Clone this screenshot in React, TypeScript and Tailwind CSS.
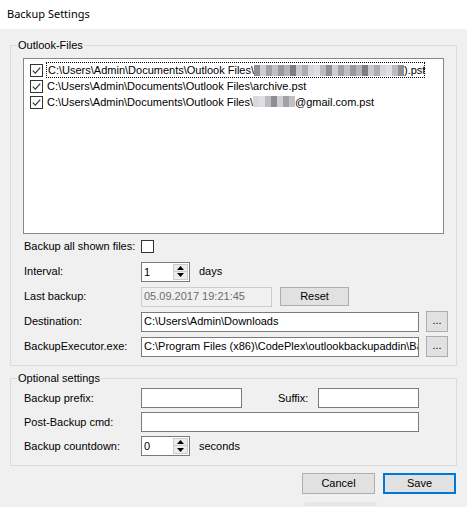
import React from "react";

const shades = [
  "bg-[#b5b5b8]",
  "bg-[#8e8e93]",
  "bg-[#c9c9cc]",
  "bg-[#a3a0a8]",
  "bg-[#d8d8da]",
  "bg-[#9b979f]",
  "bg-[#bdbdc0]",
  "bg-[#7f7c85]",
  "bg-[#cfcfd2]",
  "bg-[#aeabb3]",
  "bg-[#c2bfc6]",
  "bg-[#e0e0e2]",
];

/** verpixelter Bereich (Mailadresse) */
function Mosaic({ count, seed }: { count: number; seed: number }) {
  return (
    <span className="inline-flex h-[11px] align-[-1px]">
      {Array.from({ length: count }, (_, i) => (
        <span
          key={i}
          className={`h-full w-[6px] ${shades[(i * 7 + seed) % shades.length]}`}
        />
      ))}
    </span>
  );
}

function CheckBox({ checked }: { checked?: boolean }) {
  return (
    <span className="flex h-[13px] w-[13px] shrink-0 items-center justify-center border border-[#333] bg-white">
      {checked && (
        <svg width="9" height="9" viewBox="0 0 9 9">
          <path d="M0.8 4.6 L3.3 7.1 L8.2 1.6" fill="none" stroke="#333" strokeWidth="1.2" />
        </svg>
      )}
    </span>
  );
}

function Spinner({ value }: { value: string }) {
  return (
    <div className="flex h-[20px] w-[49px] border border-[#7a7a7a] bg-white">
      <span className="flex-1 pl-[2px] leading-[18px]">{value}</span>
      <div className="my-[1px] mr-[1px] flex w-[15px] flex-col">
        <span className="flex h-1/2 items-center justify-center border border-[#cccccc] bg-[#ececec]">
          <svg width="7" height="4" viewBox="0 0 7 4">
            <path d="M0 4 L3.5 0 L7 4 Z" fill="#000" />
          </svg>
        </span>
        <span className="flex h-1/2 items-center justify-center border border-t-0 border-[#cccccc] bg-[#ececec]">
          <svg width="7" height="4" viewBox="0 0 7 4">
            <path d="M0 0 L7 0 L3.5 4 Z" fill="#000" />
          </svg>
        </span>
      </div>
    </div>
  );
}

function Button({ label, w, primary }: { label: string; w: string; primary?: boolean }) {
  return (
    <button
      className={[
        "flex items-center justify-center bg-[#e1e1e1] leading-none",
        w,
        primary ? "h-[21px] border-2 border-[#0078d7]" : "h-[21px] border border-[#adadad]",
      ].join(" ")}
    >
      {label}
    </button>
  );
}

function Row({ label, h, children }: { label: string; h: string; children: React.ReactNode }) {
  return (
    <div className={`flex items-center pl-[13px] ${h}`}>
      <span className="w-[117px] shrink-0">{label}</span>
      {children}
    </div>
  );
}

const base = "C:\\Users\\Admin\\Documents\\Outlook Files\\";

export default function App() {
  return (
    <div className="h-[507px] w-[467px] overflow-hidden bg-[#f0f0f0] font-['Liberation_Sans',Arial,sans-serif] text-[11px] text-black">
      {/* Titel */}
      <div className="flex h-[29px] items-center bg-white pl-[7px] font-['Segoe_UI','Noto_Sans',sans-serif] text-[11px]">
        Backup Settings
      </div>

      <div className="px-[10px]">
        {/* Outlook-Files */}
        <div className="relative mt-[16px] border border-[#dcdcdc] pb-[6px] pt-[12px]">
          <span className="absolute -top-[7px] left-[6px] bg-[#f0f0f0] px-[1px] leading-[13px]">
            Outlook-Files
          </span>

          <div className="ml-[12px] h-[176px] w-[421px] border border-[#828790] bg-white pl-[6px] pt-[3px]">
            <div className="flex h-[16px] items-center">
              <CheckBox checked />
              <span className="ml-[3px] flex h-[16px] w-[379px] items-center border border-dotted border-black pl-[1px] whitespace-nowrap">
                {base}
                <Mosaic count={25} seed={1} />
                ).pst
              </span>
            </div>
            <div className="flex h-[16px] items-center">
              <CheckBox checked />
              <span className="ml-[4px] whitespace-nowrap">{base}archive.pst</span>
            </div>
            <div className="flex h-[16px] items-center">
              <CheckBox checked />
              <span className="ml-[4px] whitespace-nowrap">
                {base}
                <Mosaic count={7} seed={4} />
                @gmail.com.pst
              </span>
            </div>
          </div>

          <Row label="Backup all shown files:" h="h-[25px]">
            <CheckBox />
          </Row>
          <Row label="Interval:" h="h-[25px]">
            <Spinner value="1" />
            <span className="ml-[9px]">days</span>
          </Row>
          <Row label="Last backup:" h="h-[25px]">
            <div className="flex h-[20px] w-[131px] items-center border border-[#cccccc] bg-[#f0f0f0] pl-[2px] text-[#6d6d6d]">
              05.09.2017 19:21:45
            </div>
            <div className="ml-[8px]">
              <button className="flex h-[19px] w-[69px] items-center justify-center border border-[#adadad] bg-[#e1e1e1] leading-none">
                Reset
              </button>
            </div>
          </Row>
          <Row label="Destination:" h="h-[25px]">
            <div className="flex h-[20px] w-[278px] items-center border border-[#7a7a7a] bg-white pl-[2px] whitespace-nowrap">
              {"C:\\Users\\Admin\\Downloads"}
            </div>
            <button className="ml-[7px] flex h-[21px] w-[22px] items-center justify-center border border-[#adadad] bg-[#e1e1e1] pb-[3px] leading-none">
              ...
            </button>
          </Row>
          <Row label="BackupExecutor.exe:" h="h-[25px]">
            <div className="flex h-[20px] w-[278px] items-center overflow-hidden border border-[#7a7a7a] bg-white pl-[2px] whitespace-nowrap">
              {"C:\\Program Files (x86)\\CodePlex\\outlookbackupaddin\\Ba"}
            </div>
            <button className="ml-[7px] flex h-[21px] w-[22px] items-center justify-center border border-[#adadad] bg-[#e1e1e1] pb-[3px] leading-none">
              ...
            </button>
          </Row>
        </div>

        {/* Optional settings */}
        <div className="relative mt-[12px] border border-[#dcdcdc] pb-[7px] pt-[7px]">
          <span className="absolute -top-[7px] left-[6px] bg-[#f0f0f0] px-[1px] leading-[13px]">
            Optional settings
          </span>
          <Row label="Backup prefix:" h="h-[24px]">
            <div className="h-[20px] w-[101px] border border-[#7a7a7a] bg-white" />
            <span className="ml-[36px] w-[40px]">Suffix:</span>
            <div className="h-[20px] w-[101px] border border-[#7a7a7a] bg-white" />
          </Row>
          <Row label="Post-Backup cmd:" h="h-[24px]">
            <div className="h-[20px] w-[278px] border border-[#7a7a7a] bg-white" />
          </Row>
          <Row label="Backup countdown:" h="h-[24px]">
            <Spinner value="0" />
            <span className="ml-[9px]">seconds</span>
          </Row>
        </div>

        {/* Buttons */}
        <div className="mt-[7px] flex justify-end gap-[8px] pr-[1px]">
          <Button label="Cancel" w="w-[73px]" />
          <Button label="Save" w="w-[73px]" primary />
        </div>
        <div className="ml-[295px] mt-[8px] h-[4px] w-[72px] bg-[#e6e6e6]" />
      </div>
    </div>
  );
}
